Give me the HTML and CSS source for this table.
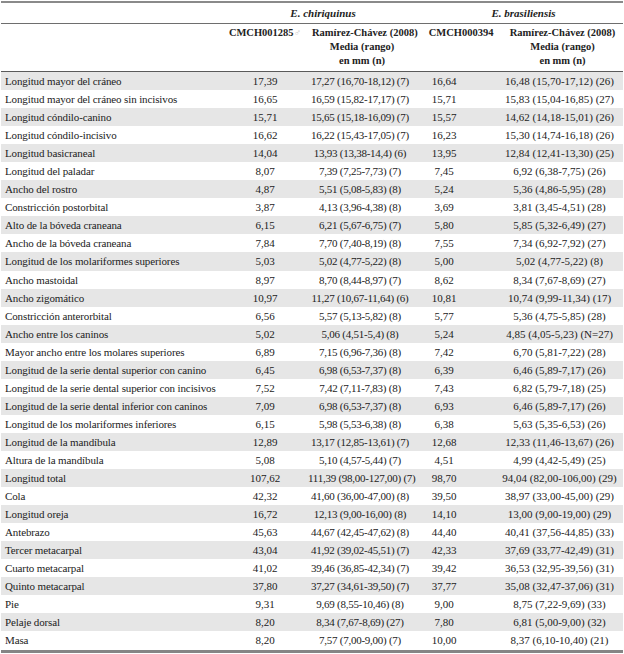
FILE: index.html
```html
<!DOCTYPE html>
<html lang="es">
<head>
<meta charset="utf-8">
<link rel="stylesheet" href="styles.css">
</head>
<body>
<table class="data">
<colgroup>
<col class="c-label"><col class="c-a"><col class="c-b"><col class="c-c"><col class="c-d">
</colgroup>
<thead>
<tr class="species">
<th></th>
<th colspan="2" class="sp sp-1">E. chiriquinus</th>
<th colspan="2" class="sp sp-2">E. brasiliensis</th>
</tr>
<tr class="heads">
<th></th>
<th class="h-a">CMCH001285<span class="sym">♂</span></th>
<th class="h-b">Ramírez-Chávez (2008)<br>Media (rango)<br>en mm (n)</th>
<th class="h-c">CMCH000394</th>
<th class="h-d">Ramírez-Chávez (2008)<br>Media (rango)<br>en mm (n)</th>
</tr>
</thead>
<tbody>
<tr class="alt"><td>Longitud mayor del cráneo</td><td>17,39</td><td>17,27 (16,70-18,12) (7)</td><td>16,64</td><td>16,48 (15,70-17,12) (26)</td></tr>
<tr><td>Longitud mayor del cráneo sin incisivos</td><td>16,65</td><td>16,59 (15,82-17,17) (7)</td><td>15,71</td><td>15,83 (15,04-16,85) (27)</td></tr>
<tr class="alt"><td>Longitud cóndilo-canino</td><td>15,71</td><td>15,65 (15,18-16,09) (7)</td><td>15,57</td><td>14,62 (14,18-15,01) (26)</td></tr>
<tr><td>Longitud cóndilo-incisivo</td><td>16,62</td><td>16,22 (15,43-17,05) (7)</td><td>16,23</td><td>15,30 (14,74-16,18) (26)</td></tr>
<tr class="alt"><td>Longitud basicraneal</td><td>14,04</td><td>13,93 (13,38-14,4) (6)</td><td>13,95</td><td>12,84 (12,41-13,30) (25)</td></tr>
<tr><td>Longitud del paladar</td><td>8,07</td><td>7,39 (7,25-7,73) (7)</td><td>7,45</td><td>6,92 (6,38-7,75) (26)</td></tr>
<tr class="alt"><td>Ancho del rostro</td><td>4,87</td><td>5,51 (5,08-5,83) (8)</td><td>5,24</td><td>5,36 (4,86-5,95) (28)</td></tr>
<tr><td>Constricción postorbital</td><td>3,87</td><td>4,13 (3,96-4,38) (8)</td><td>3,69</td><td>3,81 (3,45-4,51) (28)</td></tr>
<tr class="alt"><td>Alto de la bóveda craneana</td><td>6,15</td><td>6,21 (5,67-6,75) (7)</td><td>5,80</td><td>5,85 (5,32-6,49) (27)</td></tr>
<tr><td>Ancho de la bóveda craneana</td><td>7,84</td><td>7,70 (7,40-8,19) (8)</td><td>7,55</td><td>7,34 (6,92-7,92) (27)</td></tr>
<tr class="alt"><td>Longitud de los molariformes superiores</td><td>5,03</td><td>5,02 (4,77-5,22) (8)</td><td>5,00</td><td>5,02 (4,77-5,22) (8)</td></tr>
<tr><td>Ancho mastoidal</td><td>8,97</td><td>8,70 (8,44-8,97) (7)</td><td>8,62</td><td>8,34 (7,67-8,69) (27)</td></tr>
<tr class="alt"><td>Ancho zigomático</td><td>10,97</td><td>11,27 (10,67-11,64) (6)</td><td>10,81</td><td>10,74 (9,99-11,34) (17)</td></tr>
<tr><td>Constricción anterorbital</td><td>6,56</td><td>5,57 (5,13-5,82) (8)</td><td>5,77</td><td>5,36 (4,75-5,85) (28)</td></tr>
<tr class="alt"><td>Ancho entre los caninos</td><td>5,02</td><td>5,06 (4,51-5,4) (8)</td><td>5,24</td><td>4,85 (4,05-5,23) (N=27)</td></tr>
<tr><td>Mayor ancho entre los molares superiores</td><td>6,89</td><td>7,15 (6,96-7,36) (8)</td><td>7,42</td><td>6,70 (5,81-7,22) (28)</td></tr>
<tr class="alt"><td>Longitud de la serie dental superior con canino</td><td>6,45</td><td>6,98 (6,53-7,37) (8)</td><td>6,39</td><td>6,46 (5,89-7,17) (26)</td></tr>
<tr><td>Longitud de la serie dental superior con incisivos</td><td>7,52</td><td>7,42 (7,11-7,83) (8)</td><td>7,43</td><td>6,82 (5,79-7,18) (25)</td></tr>
<tr class="alt"><td>Longitud de la serie dental inferior con caninos</td><td>7,09</td><td>6,98 (6,53-7,37) (8)</td><td>6,93</td><td>6,46 (5,89-7,17) (26)</td></tr>
<tr><td>Longitud de los molariformes inferiores</td><td>6,15</td><td>5,98 (5,53-6,38) (8)</td><td>6,38</td><td>5,63 (5,35-6,53) (26)</td></tr>
<tr class="alt"><td>Longitud de la mandíbula</td><td>12,89</td><td>13,17 (12,85-13,61) (7)</td><td>12,68</td><td>12,33 (11,46-13,67) (26)</td></tr>
<tr><td>Altura de la mandíbula</td><td>5,08</td><td>5,10 (4,57-5,44) (7)</td><td>4,51</td><td>4,99 (4,42-5,49) (25)</td></tr>
<tr class="alt"><td>Longitud total</td><td>107,62</td><td>111,39 (98,00-127,00) (7)</td><td>98,70</td><td>94,04 (82,00-106,00) (29)</td></tr>
<tr><td>Cola</td><td>42,32</td><td>41,60 (36,00-47,00) (8)</td><td>39,50</td><td>38,97 (33,00-45,00) (29)</td></tr>
<tr class="alt"><td>Longitud oreja</td><td>16,72</td><td>12,13 (9,00-16,00) (8)</td><td>14,10</td><td>13,00 (9,00-19,00) (29)</td></tr>
<tr><td>Antebrazo</td><td>45,63</td><td>44,67 (42,45-47,62) (8)</td><td>44,40</td><td>40,41 (37,56-44,85) (33)</td></tr>
<tr class="alt"><td>Tercer metacarpal</td><td>43,04</td><td>41,92 (39,02-45,51) (7)</td><td>42,33</td><td>37,69 (33,77-42,49) (31)</td></tr>
<tr><td>Cuarto metacarpal</td><td>41,02</td><td>39,46 (36,85-42,34) (7)</td><td>39,42</td><td>36,53 (32,95-39,56) (31)</td></tr>
<tr class="alt"><td>Quinto metacarpal</td><td>37,80</td><td>37,27 (34,61-39,50) (7)</td><td>37,77</td><td>35,08 (32,47-37,06) (31)</td></tr>
<tr><td>Pie</td><td>9,31</td><td>9,69 (8,55-10,46) (8)</td><td>9,00</td><td>8,75 (7,22-9,69) (33)</td></tr>
<tr class="alt"><td>Pelaje dorsal</td><td>8,20</td><td>8,34 (7,67-8,69) (27)</td><td>7,80</td><td>6,81 (5,00-9,00) (32)</td></tr>
<tr class="last"><td>Masa</td><td>8,20</td><td>7,57 (7,00-9,00) (7)</td><td>10,00</td><td>8,37 (6,10-10,40) (21)</td></tr>
</tbody>
</table>
</body>
</html>
```

FILE: styles.css
```css
html, body {
  margin: 0;
  padding: 0;
  background: #ffffff;
}

body {
  font-family: "Liberation Serif", "Times New Roman", serif;
  font-size: 11px;
  color: #222222;
}

.data {
  margin: 1px 0 0 1px;
  width: 622px;
  table-layout: fixed;
  border-collapse: separate;
  border-spacing: 0;
  border-top: 2px solid #8a8a8a;
}

.c-label { width: 221px; }
.c-a { width: 86px; }
.c-b { width: 104px; }
.c-c { width: 90px; }
.c-d { width: 121px; }

th, td {
  padding: 0;
  white-space: nowrap;
}

.species th {
  height: 20px;
  border-bottom: 1px solid #6e6e6e;
  font-style: italic;
  font-weight: bold;
  text-align: center;
  vertical-align: middle;
  line-height: 20px;
}

.sp { padding-left: 12px; }

.heads th {
  height: 48px;
  border-bottom: 1px solid #5a5a5a;
  font-weight: bold;
  font-size: 10.5px;
  line-height: 14px;
  text-align: center;
  vertical-align: top;
  padding-top: 2px;
  box-sizing: border-box;
}

.h-b { padding-left: 4px; }
.h-c { padding-left: 8px; }

.sym {
  font-weight: normal;
  color: #c8c8c8;
  font-size: 10px;
}

tbody td {
  height: 18.05px;
  line-height: 18px;
  text-align: center;
  vertical-align: middle;
}

tbody td:first-child {
  text-align: left;
  padding-left: 4px;
  letter-spacing: -0.12px;
}

tbody td:nth-child(3) { letter-spacing: -0.25px; }
tbody td:nth-child(4) { padding-right: 26px; }
tbody td:nth-child(5) { padding-right: 6px; }

tbody tr.alt td {
  background: #e6e6e6;
}

tbody tr.last td {
  border-bottom: 3px solid #858585;
}
```
